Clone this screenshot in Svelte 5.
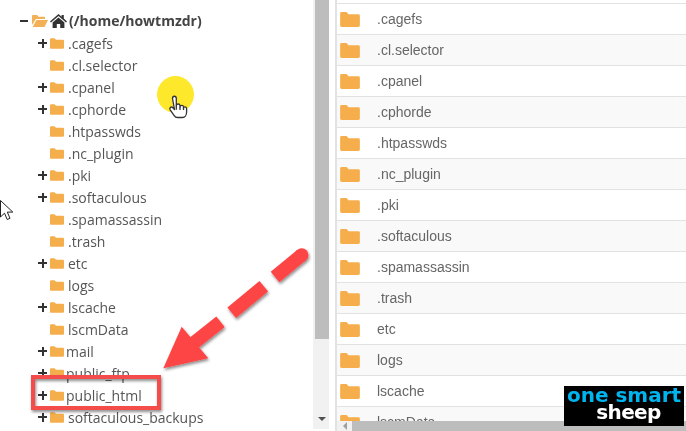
<script lang="ts">
  const tree = [
    { name: '.cagefs', open: true },
    { name: '.cl.selector', open: false },
    { name: '.cpanel', open: true },
    { name: '.cphorde', open: true },
    { name: '.htpasswds', open: false },
    { name: '.nc_plugin', open: false },
    { name: '.pki', open: true },
    { name: '.softaculous', open: true },
    { name: '.spamassassin', open: false },
    { name: '.trash', open: false },
    { name: 'etc', open: true },
    { name: 'logs', open: false },
    { name: 'lscache', open: true },
    { name: 'lscmData', open: false },
    { name: 'mail', open: true, tight: true },
    { name: 'public_ftp', open: true, tight: true },
    { name: 'public_html', open: true, tight: true },
    { name: 'softaculous_backups', open: true }
  ];

  const files = [
    '.cagefs', '.cl.selector', '.cpanel', '.cphorde', '.htpasswds', '.nc_plugin', '.pki',
    '.softaculous', '.spamassassin', '.trash', 'etc', 'logs', 'lscache', 'lscmData'
  ];

  const folder = 'M1.500 0h5l2 2.200h10a1.500 1.500 0 0 1 1.500 1.500v10a1.500 1.500 0 0 1-1.500 1.500h-17A1.500 1.500 0 0 1 0 13.700V1.500A1.500 1.500 0 0 1 1.500 0z';
</script>

<div class="page">
  <div class="tree-panel">
    <div class="root-row">
      <span class="toggle minus"></span>
      <svg class="open-folder" viewBox="0 0 16 12" width="16" height="12">
        <path d="M1 0h4l1.500 1.700H12a1 1 0 0 1 1 1V4H4L0 10V1a1 1 0 0 1 1-1z" />
        <path d="M4.500 5H16l-3.500 7H.6z" />
      </svg>
      <svg class="home" viewBox="0 0 17 14" width="17" height="14">
        <path d="M8.500 0 11.600 2.700V1h2.200v3.600L17 7.400l-1 1.100-7.500-6.400L1 8.500 0 7.400z" />
        <path d="M8.500 3.500 14.400 8.600V14H10.200V10H6.800V14H2.600V8.600z" />
      </svg>
      <span class="root-label">(/home/howtmzdr)</span>
    </div>
    {#each tree as item}
      <div class="tree-row">
        <span class="toggle" class:plus={item.open}></span>
        <svg class="tree-folder" viewBox="0 0 20 15.200" width="14" height="11">
          <path d={folder} />
        </svg>
        <span class="tree-label" class:tight={item.tight}>{item.name}</span>
      </div>
    {/each}
  </div>

  <div class="vscroll">
    <div class="vthumb"></div>
    <div class="down-arrow"></div>
  </div>

  <div class="file-panel">
    <div class="file-list">
      {#each files as name, idx}
        <div class="file-row" class:odd={idx % 2 === 1}>
          <svg class="file-folder" viewBox="0 0 20 15.200" width="20" height="15">
            <path d={folder} />
          </svg>
          <span>{name}</span>
        </div>
      {/each}
    </div>
    <div class="hscroll">
      <div class="left-arrow"></div>
      <div class="hthumb"></div>
    </div>
  </div>

  <div class="highlight"></div>

  <svg class="overlay" viewBox="0 0 686 431" width="686" height="431">
    <defs>
      <filter id="shadow" x="-20%" y="-20%" width="150%" height="150%">
        <feDropShadow dx="1" dy="2" stdDeviation="1.500" flood-color="#000" flood-opacity="0.45" />
      </filter>
    </defs>
    <g filter="url(#shadow)">
      <circle cx="301.700" cy="255" r="6.800" fill="#fe4545" />
      <path class="dash" d="M301.700 255 275 277" />
      <path class="dash" d="M263.800 286.300 231.700 312.700" />
      <path class="dash" d="M220.500 321.700 190 346" />
      <path d="M163.300 368.300 181.700 326.700 208.300 358.300z" fill="#fe4545" />
    </g>
    <rect class="red-box" x="33" y="377" width="126" height="31" filter="url(#shadow)" />

    <g class="hand">
      <path d="M172.500 98.500c0-3 3.800-3 3.800 0v7.300c.2-2.400 3.600-2.400 3.700 0v1c.3-2 3.300-2 3.500.2v1c.4-1.600 3-1.400 3.100.6v3.400c0 3-1.700 5.500-4 5.500h-5c-1.700 0-2.700-.8-3.600-2.200l-3.800-5.500c-1.300-2 1.200-3.800 2.700-2.100l1.600 1.800z" />
      <path d="M176.300 105.800v4M180 106.800v3.200M183.500 108v2" />
    </g>

    <path class="pointer" d="M0.500 200.500V217l4-3.800 2.700 6.300 2.800-1.200-2.700-6.200h5.500z" />
  </svg>

  <div class="logo">
    <div class="logo-top">one smart</div>
    <div class="logo-bottom">sheep</div>
  </div>
</div>

<style>
  :global(body) {
    margin: 0;
    background: #fff;
  }

  .page {
    position: relative;
    display: flex;
    width: 686px;
    height: 431px;
    overflow: hidden;
    background: #fff;
    filter: blur(0.45px);
  }

  .tree-panel {
    box-sizing: border-box;
    width: 313px;
    height: 431px;
    padding: 10px 0 0 20px;
    overflow: hidden;
    font-family: "Open Sans", sans-serif;
    font-size: 14px;
    color: #555;
  }

  .root-row {
    display: flex;
    align-items: center;
    height: 22px;
    line-height: 22px;
  }

  .tree-row {
    display: flex;
    align-items: center;
    height: 22px;
    margin-left: 18px;
    white-space: nowrap;
  }

  .toggle {
    position: relative;
    flex: none;
    width: 12px;
    height: 12px;
  }

  .minus::before,
  .plus::before,
  .plus::after {
    content: '';
    position: absolute;
    background: #333;
  }

  .minus::before {
    left: 0;
    top: 5px;
    width: 8px;
    height: 2px;
  }

  .plus::before {
    left: 0;
    top: 5px;
    width: 9px;
    height: 2px;
  }

  .plus::after {
    left: 3.500px;
    top: 1.500px;
    width: 2px;
    height: 9px;
  }

  .open-folder {
    fill: #f3b157;
    margin-right: 2px;
  }

  .home {
    fill: #333;
    margin-right: 2px;
  }

  .root-label {
    font-weight: 700;
    color: #444;
  }

  .tree-folder {
    flex: none;
    fill: #f5ae4c;
  }

  .tree-label {
    margin-left: 4px;
  }

  .tree-label.tight {
    margin-left: 2px;
  }

  .vscroll {
    position: relative;
    box-sizing: border-box;
    width: 16px;
    height: 429px;
    background: #f1f1f1;
    flex: none;
  }

  .vthumb {
    width: 14px;
    height: 339px;
    margin-left: 2px;
    background: #bdbdbd;
  }

  .down-arrow {
    position: absolute;
    left: 5px;
    top: 417px;
    border-left: 4px solid transparent;
    border-right: 4px solid transparent;
    border-top: 4px solid #505050;
  }

  .file-panel {
    display: flex;
    flex-direction: column;
    flex: 1;
    margin-left: 6px;
    height: 431px;
    border-left: 2px solid #e2e2e2;
    overflow: hidden;
  }

  .file-list {
    flex: 1;
    min-height: 0;
    padding-top: 3px;
    overflow: hidden;
    font-family: "Liberation Sans", Arial, sans-serif;
    font-size: 14px;
    color: #666;
  }

  .file-row {
    box-sizing: border-box;
    display: flex;
    align-items: center;
    height: 31px;
    padding-left: 3px;
    border-top: 1px solid #e2e2e2;
    background: #fff;
  }

  .file-row.odd {
    background: #f9f9f9;
  }

  .file-folder {
    flex: none;
    fill: #f6ae4c;
    margin-right: 17px;
  }

  .hscroll {
    display: flex;
    align-items: center;
    flex: none;
    height: 10px;
    background: #f1f1f1;
  }

  .left-arrow {
    margin-left: 6px;
    border-top: 4px solid transparent;
    border-bottom: 4px solid transparent;
    border-right: 4px solid #a0a0a0;
  }

  .hthumb {
    flex: 1;
    height: 10px;
    margin-left: 5px;
    background: #bdbdbd;
  }

  /* things drawn over the screen recording */
  .highlight {
    position: absolute;
    left: 157px;
    top: 76px;
    width: 37px;
    height: 37px;
    border-radius: 50%;
    background: #fde82c;
  }

  .overlay {
    position: absolute;
    left: 0;
    top: 0;
  }

  .dash {
    fill: none;
    stroke: #fe4545;
    stroke-width: 13.500;
  }

  .red-box {
    fill: none;
    stroke: #f44b4b;
    stroke-width: 4;
  }

  .hand path {
    fill: #fff;
    stroke: #333;
    stroke-width: 1.300;
    stroke-linejoin: round;
  }

  .pointer {
    fill: #fff;
    stroke: #222;
    stroke-width: 1;
  }

  .logo {
    position: absolute;
    left: 564px;
    top: 386px;
    box-sizing: border-box;
    width: 120px;
    height: 40px;
    background: #000;
    font-family: "DejaVu Sans", sans-serif;
    font-weight: 700;
    text-align: center;
  }

  .logo-top {
    height: 16px;
    font-size: 20px;
    line-height: 19px;
    color: #00b5ef;
    white-space: nowrap;
  }

  .logo-bottom {
    height: 20px;
    font-size: 20px;
    line-height: 20px;
    letter-spacing: -0.600px;
    color: #fff;
    margin-left: 9px;
  }
</style>
